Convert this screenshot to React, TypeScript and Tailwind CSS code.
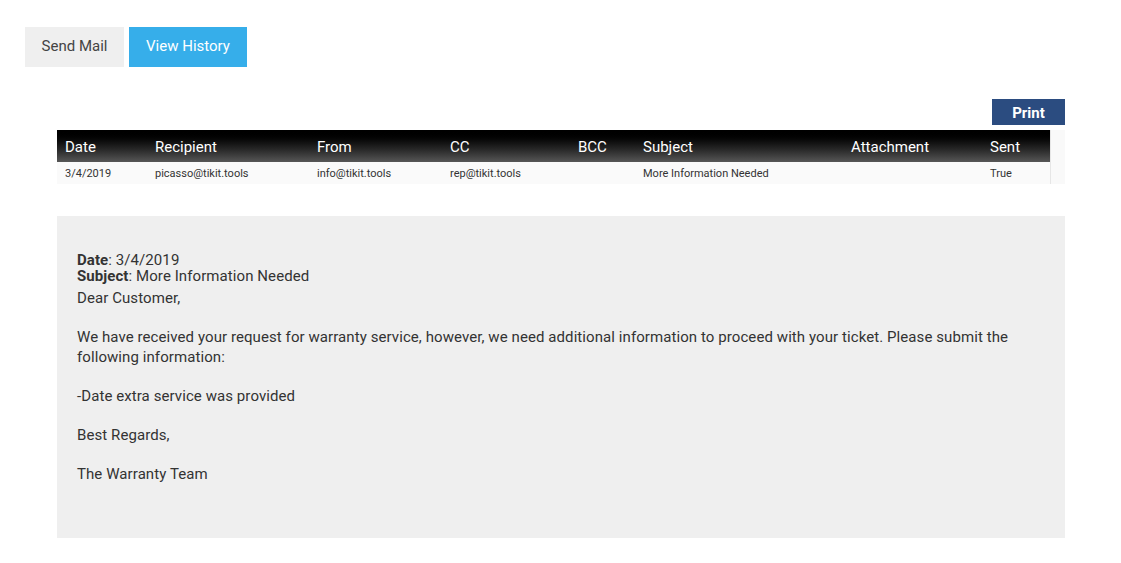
import React from "react";

const cols = [
  { label: "Date", w: "w-[90px]" },
  { label: "Recipient", w: "w-[162px]" },
  { label: "From", w: "w-[133px]" },
  { label: "CC", w: "w-[128px]" },
  { label: "BCC", w: "w-[65px]" },
  { label: "Subject", w: "w-[208px]" },
  { label: "Attachment", w: "w-[139px]" },
  { label: "Sent", w: "w-[68px]" },
];

const row = ["3/4/2019", "picasso@tikit.tools", "info@tikit.tools", "rep@tikit.tools", "", "More Information Needed", "", "True"];

export default function App() {
  return (
    <div className="min-h-[563px] bg-white font-['Roboto',sans-serif] text-[#333]">
      {/* Tabs */}
      <div className="flex gap-[5px] pl-[25px] pt-[27px]">
        <button className="h-10 w-[99px] bg-[#efefef] pb-[2px] text-[15px] text-[#444]">Send Mail</button>
        <button className="h-10 w-[118px] bg-[#36aeea] pb-[2px] text-[15px] text-white">View History</button>
      </div>

      <div className="ml-[57px] mt-8 w-[1008px]">
        <div className="flex justify-end">
          <button className="h-[26px] w-[73px] bg-[#2b4c80] pt-[2px] text-[15px] font-bold text-white">Print</button>
        </div>

        {/* History table */}
        <div className="mt-[5px] flex">
          <table className="w-[993px] table-fixed border-collapse">
            <thead>
              <tr className="h-8 bg-gradient-to-b from-black to-[#575757]">
                {cols.map((c) => (
                  <th key={c.label} className={`${c.w} px-2 pt-[2px] text-left text-[15px] font-normal text-white`}>
                    {c.label}
                  </th>
                ))}
              </tr>
            </thead>
            <tbody>
              <tr className="h-[22px] bg-[#fafafa]">
                {row.map((v, i) => (
                  <td key={i} className="px-2 pt-[2px] text-[11px] text-[#333]">
                    {v}
                  </td>
                ))}
              </tr>
            </tbody>
          </table>
          <div className="h-[54px] w-[15px] border-l border-[#e6e6e6] bg-[#f9f9f9]" />
        </div>

        {/* Email preview */}
        <div className="mt-8 h-[322px] bg-[#efefef] px-5 pt-[36px] text-[15px] leading-[19.5px] tracking-[0.08px] text-[#333]">
          <div className="leading-4">
            <div>
              <b className="font-bold">Date</b>: 3/4/2019
            </div>
            <div>
              <b className="font-bold">Subject</b>: More Information Needed
            </div>
          </div>
          <p className="mt-[5px]">Dear Customer,</p>
          <p className="mt-[19.5px]">
            We have received your request for warranty service, however, we need additional information to proceed with your ticket. Please submit the following information:
          </p>
          <p className="mt-[19.5px]">-Date extra service was provided</p>
          <p className="mt-[19.5px]">Best Regards,</p>
          <p className="mt-[19.5px]">The Warranty Team</p>
        </div>
      </div>
    </div>
  );
}
